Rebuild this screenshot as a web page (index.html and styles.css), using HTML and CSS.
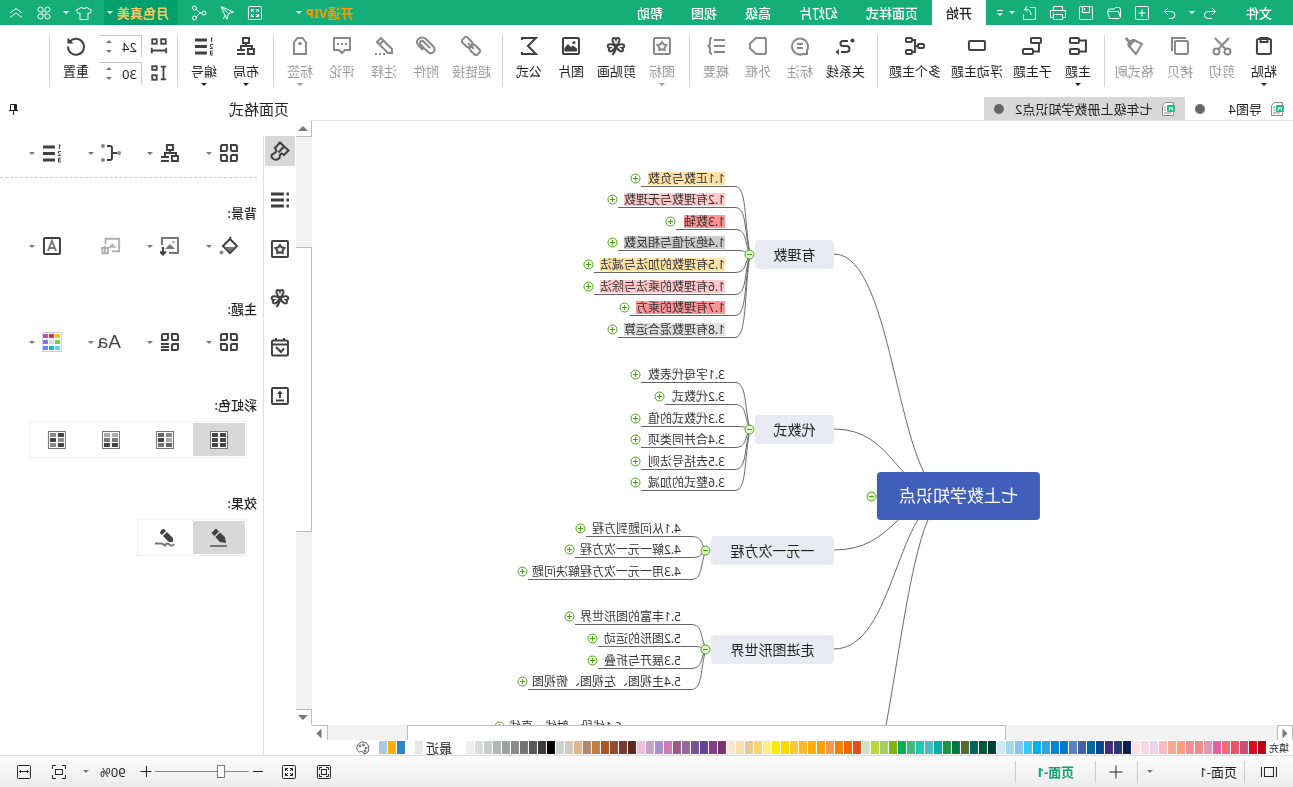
FILE: index.html
```html
<!DOCTYPE html>
<html lang="zh-CN">
<head>
<meta charset="utf-8">
<title>七年级上册数学知识点2</title>
<link rel="stylesheet" href="styles.css">
</head>
<body>
<svg class="sprite" aria-hidden="true">
  <symbol id="undo" viewBox="0 0 16 16"><path d="M3 6.5h7a3.5 3.5 0 0 1 0 7H6M6 3L2.500 6.500L6 10"/></symbol>
  <symbol id="redo" viewBox="0 0 16 16"><path d="M13 6.500H6.500a3.500 3.500 0 0 0 0 7H9M10 3l3.500 3.500L10 10"/></symbol>
  <symbol id="new" viewBox="0 0 16 16"><rect x="1.500" y="1.500" width="13" height="13" rx="1"/><path d="M8 4.500v7M4.500 8h7"/></symbol>
  <symbol id="open" viewBox="0 0 16 16"><path d="M2.500 13.500h10l2-7h-11l-2 6V4.500q0-2 2-2h3l1.500 1.500h4.500q1.500 0 1.500 2.500"/></symbol>
  <symbol id="save" viewBox="0 0 16 16"><rect x="1.500" y="1.500" width="13" height="13" rx="1"/><path d="M4.500 1.500v6h7v-6M9.500 3v2.500"/></symbol>
  <symbol id="print" viewBox="0 0 16 16"><path d="M3.500 5V1.500h9V5M3 12.500H.500V5.500h15v7H13M3.500 9.500h9v5h-9zM12 7.500h1"/></symbol>
  <symbol id="export" viewBox="0 0 16 16"><path d="M8 2.500H2.500v12h12V9M7 10q0-6 6-6M10.500 1.500L13.500 4l-2.500 3"/></symbol>
  <symbol id="expand" viewBox="0 0 16 16"><rect x="1.500" y="1.500" width="13" height="13" rx="1"/><path d="M4.500 7V4.500H7M9 4.500h2.500V7M11.500 9v2.500H9M7 11.500H4.500V9M4.500 4.500L7 7M11.500 4.500L9 7M4.500 11.500L7 9M11.500 11.500L9 9"/></symbol>
  <symbol id="send" viewBox="0 0 16 16"><path d="M14 1.500L1.500 7l5 1.500L8 14.500zM14 1.500L6.500 8.500M9 10l3 4"/></symbol>
  <symbol id="share" viewBox="0 0 16 16"><circle cx="3" cy="8" r="2"/><circle cx="12.500" cy="3" r="2"/><circle cx="12.500" cy="13" r="2"/><path d="M5 8h2l4-4M7 8l4 4"/></symbol>
  <symbol id="shirt" viewBox="0 0 16 16"><path d="M5 2.500q3 2 6 0l4.500 2.500-1.500 3.500-2-.5v6.500H4V8l-2 .5L.500 5z"/></symbol>
  <symbol id="petals" viewBox="0 0 16 16"><path d="M7 7H4.500a2.500 2.500 0 1 1 2.500-2.500zM9 7h2.500a2.500 2.500 0 1 0-2.500-2.500zM7 9H4.500a2.500 2.500 0 1 0 2.500 2.500zM9 9h2.500a2.500 2.500 0 1 1-2.500 2.500z"/></symbol>
  <symbol id="chevrons" viewBox="0 0 16 16"><path d="M2 8l6-4.500L14 8M2 12.500L8 8l6 4.500"/></symbol>

  <symbol id="paste" viewBox="0 0 20 20"><rect x="3" y="3" width="14" height="15" rx="1.500"/><rect x="6.500" y="2" width="7" height="4"/></symbol>
  <symbol id="cut" viewBox="0 0 20 20"><circle cx="4.500" cy="15.500" r="3"/><circle cx="15.500" cy="15.500" r="3"/><path d="M6.500 13L17 2M13.500 13L3 2"/></symbol>
  <symbol id="copy" viewBox="0 0 20 20"><rect x="2" y="5" width="13" height="13" rx="1"/><path d="M4 2h14v13"/></symbol>
  <symbol id="painter" viewBox="0 0 20 20"><path d="M2 8l8-4 5 6-7 8z"/><path class="solid" d="M8 4l4-1 2 1.500L17 1l2 2-3 3.500 1 2-2 3.500z"/></symbol>
  <symbol id="topic" viewBox="0 0 20 20"><rect x="9" y="2" width="9" height="5" rx="1"/><rect x="9" y="13" width="9" height="5" rx="1"/><path d="M8 4.500H2v11h6"/></symbol>
  <symbol id="subtopic" viewBox="0 0 20 20"><rect x="1" y="2" width="10" height="5" rx="1"/><rect x="9" y="13" width="10" height="5" rx="1"/><path d="M3 8v7.500h6"/></symbol>
  <symbol id="floating" viewBox="0 0 20 20"><rect x="2" y="5" width="16" height="9" rx="1"/></symbol>
  <symbol id="multi" viewBox="0 0 20 20"><rect x="1" y="8" width="6" height="4" rx="1"/><rect x="13" y="2" width="6" height="4" rx="1"/><rect x="13" y="14" width="6" height="4" rx="1"/><path d="M7 10h3M13 4h-3v12h3"/></symbol>
  <symbol id="relation" viewBox="0 0 20 20"><path d="M14 5H8.500a2.500 2.500 0 0 0 0 5" visibility="hidden"/><path d="M7 5h5a2.500 2.500 0 0 1 0 5H8.500a3 3 0 0 0 0 6H14"/><circle class="solid" cx="2.500" cy="4.500" r="2"/><path class="solid" d="M16 13l3.500 3-3.500 3z"/></symbol>
  <symbol id="callout" viewBox="0 0 20 20"><path d="M3 18v-3.500a8 8 0 1 1 4 3.500zM7 8h6M7 12h6"/></symbol>
  <symbol id="frame" viewBox="0 0 20 20"><path d="M3 2h9l6 5.500v5L12 18H3q-1 0-1-1V3q0-1 1-1z"/></symbol>
  <symbol id="summary" viewBox="0 0 20 20"><path d="M1 4h11M1 10h11M1 16h11M14 2q2 0 2 2v3.500q0 2.500 2.500 2.500Q16 10 16 12.500V16q0 2-2 2"/></symbol>
  <symbol id="mark" viewBox="0 0 20 20"><rect x="2" y="2" width="16" height="16" rx="1"/><path d="M10 6l1.600 2.300 2.900.8-1.800 2.200v2.700l-2.700-.8-2.700.8v-2.700L5.500 9.100l2.900-.8z"/></symbol>
  <symbol id="clover" viewBox="0 0 20 20"><path d="M10 9.500C6 7 5.500 2 8 2q1.500 0 2 1.500Q10.500 2 12 2c2.500 0 2 5-2 7.500"/><path d="M10 9.500C6 7 5.500 2 8 2q1.500 0 2 1.500Q10.500 2 12 2c2.500 0 2 5-2 7.500" transform="rotate(-108 10 10)"/><path d="M10 9.500C6 7 5.500 2 8 2q1.500 0 2 1.500Q10.500 2 12 2c2.500 0 2 5-2 7.500" transform="rotate(108 10 10)"/><path d="M10 10q0 5 3.500 9"/></symbol>
  <symbol id="image" viewBox="0 0 20 20"><rect x="2" y="2" width="16" height="16" rx="1"/><path class="solid" d="M4 15.500v-3l4 -3 2 1.500 3-3 3.500 4v3.500z"/><circle class="solid" cx="7" cy="6.500" r="1.500"/></symbol>
  <symbol id="sigma" viewBox="0 0 20 20"><path d="M17 4V2H3l8 8-8 8h14v-2"/></symbol>
  <symbol id="link" viewBox="0 0 20 20"><g transform="rotate(-45 10 10)"><rect x="-.5" y="6.500" width="10" height="7" rx="2"/><rect x="10.500" y="6.500" width="10" height="7" rx="2"/><path d="M6 10h8"/></g></symbol>
  <symbol id="clip" viewBox="0 0 20 20"><path d="M6 12l6-6q2-2 3.500-.5T15 9l-7 7q-3 2.500-5.500 0T3 10l7-7q4-3 7.500 0T17 10l-4 4"/></symbol>
  <symbol id="annotate" viewBox="0 0 20 20"><path d="M2 17v-4L13 2l4 4L6 17zM10.500 4.500l4 4"/><path d="M9 18h2M13 18h2M17 18h2"/></symbol>
  <symbol id="comment" viewBox="0 0 20 20"><path d="M2 2h16v12h-5l-3 3-3-3H2z"/><path d="M5 8h2M9 8h2M13 8h2"/></symbol>
  <symbol id="tag" viewBox="0 0 20 20"><path d="M4 18V6.500L7.500 2h5L16 6.500V18z"/><circle class="solid" cx="10" cy="7.500" r="1.800"/></symbol>
  <symbol id="layout" viewBox="0 0 20 20"><rect x="7" y="2" width="6" height="5"/><path d="M10 7v3M4 13v-3h11v3"/><rect x="2" y="13" width="6" height="5"/><path d="M11 14h8M11 18h8"/></symbol>
  <symbol id="number" viewBox="0 0 20 20"><path class="thick" d="M7 4h12M7 10.500h12M7 17h12"/><path class="fine" d="M1.500 2.500l1-1V6M1 8.500h2.500v2L1.500 12v.5H4M1 15h2.500v4H1M1 17h2.500"/></symbol>
  <symbol id="hgap" viewBox="0 0 20 20"><rect x="2.500" y="2.500" width="5" height="5"/><rect x="12.500" y="2.500" width="5" height="5"/><path d="M2 12v6M18 12v6M2 15h16"/></symbol>
  <symbol id="vgap" viewBox="0 0 20 20"><rect x="12.500" y="2.500" width="5" height="4"/><rect x="12.500" y="12.500" width="5" height="5"/><path d="M2 3h6M2 17h6M5 3v14"/></symbol>
  <symbol id="reset" viewBox="0 0 20 20"><path d="M16 5.500A8 8 0 1 0 18 10.500"/><path class="solid" d="M18.500 1.500v6h-6z"/></symbol>
  <symbol id="doc" viewBox="0 0 14 14"><path class="paper" d="M2.500 3V.500h8l3 3v10h-11v-3M10 5h2M10 8h2M5 11h7"/><rect class="badge" x="1" y="3" width="8" height="7" rx="1"/><path class="letter" d="M3.500 8.500V5l1.500 2 1.500-2v3.500"/></symbol>
  <symbol id="pin" viewBox="0 0 12 12"><path d="M2.500 7.500V1.500h6v6M1 7.500h9M5.500 8v4"/><path class="solid" d="M3 2h2v5H3z"/></symbol>

  <symbol id="grid" viewBox="0 0 20 20"><path d="M2 3.500Q2 2 3.500 2H8v4.500Q8 8 6.500 8H2zM12 2h4.500Q18 2 18 3.500V8h-4.500Q12 8 12 6.500zM2 12h4.500Q8 12 8 13.500V18H3.500Q2 18 2 16.500zM13.500 12H18v4.500q0 1.500-1.500 1.500H12v-4.500q0-1.500 1.500-1.500z"/></symbol>
  <symbol id="gridlist" viewBox="0 0 20 20"><path d="M2 3.500Q2 2 3.500 2H8v4.500Q8 8 6.500 8H2zM12 2h4.500Q18 2 18 3.500V8h-4.500Q12 8 12 6.500zM2 12h4.500Q8 12 8 13.500V18H3.500Q2 18 2 16.500zM11 12h8M11 15h8M11 18h8"/></symbol>
  <symbol id="branch" viewBox="0 0 20 20"><path d="M4 10h5M14 3h-3q-2 0-2 2v10q0 2 2 2h3"/><g class="pale"><circle cx="2" cy="10" r="2"/><circle cx="18" cy="3" r="2"/><circle cx="18" cy="17" r="2"/></g></symbol>
  <symbol id="bucket" viewBox="0 0 20 20"><path d="M9 3l-7 7 7 7 7-7zM10 4L8 1"/><path d="M4 11h10l-5 5z" fill="#777" stroke="none"/><circle class="pale" cx="17.500" cy="16.500" r="2"/></symbol>
  <symbol id="imgdown" viewBox="0 0 20 20"><path class="gray" d="M18 9V2H2v15h9"/><path class="graysolid" d="M5 13l5-5 5 5z"/><circle class="graysolid" cx="6.500" cy="6" r="1"/><path d="M17 11v7M14 15.500l3 3 3-3"/></symbol>
  <symbol id="imgtrash" viewBox="0 0 22 20"><path class="gray" d="M17 8V2H2v14h8"/><path class="graysolid" d="M5 12l4.500-5 4.500 5z"/><path class="gray" d="M13 12h9M14.500 13v5h6v-5M17.500 10v8"/></symbol>
  <symbol id="textbox" viewBox="0 0 20 20"><rect x="2" y="2" width="16" height="16" rx="1"/><path class="gray" d="M6 15l4-10 4 10M7 12h6"/></symbol>
  <symbol id="palettegrid" viewBox="0 0 20 20"><rect x=".5" y=".5" width="19" height="19" fill="#fff" stroke="#c9d0dd" stroke-width="1"/><g stroke="none"><path fill="#f3c400" d="M2 2h5v4H2z"/><path fill="#e02e4c" d="M8 2h5v4H8z"/><path fill="#bd4fc8" d="M14 2h5v4h-5z"/><path fill="#76cf42" d="M2 8h5v4H2z"/><path fill="#dcdcdc" d="M8 8h5v4H8z"/><path fill="#8c71ea" d="M14 8h5v4h-5z"/><path fill="#6bcada" d="M2 14h5v4H2z"/><path fill="#00baf2" d="M8 14h5v4H8z"/><path fill="#6b83ff" d="M14 14h5v4h-5z"/></g></symbol>
  <symbol id="brush" viewBox="0 0 20 20"><path d="M10 1.500L1.500 9.500 6 14l2.500-1.500 1.500 1.500.5 3q3 3 6 1t1.500-4.500L15 12l-1.500-2 1.500-3zM6 5.500l5.500 6"/></symbol>
  <symbol id="outline" viewBox="0 0 20 20"><path class="thick" d="M6 4h13M6 10h13M6 16h13"/><path class="thick" d="M1 4h2.500M1 10h2.500M1 16h2.500"/></symbol>
  <symbol id="task" viewBox="0 0 20 20"><rect x="2" y="3.500" width="16" height="15" rx="1.500"/><path d="M2 7.500h16M6 1v3M14 1v3M6 11.500l3 3.500 5-5"/></symbol>
  <symbol id="upload" viewBox="0 0 20 20"><rect x="2" y="2" width="16" height="16" rx="1"/><path d="M6 14.500h8M10 12V7"/><path class="solid" d="M7 8l3-3.500L13 8z"/></symbol>
  <symbol id="pen" viewBox="0 0 20 20"><path class="solid" d="M3 15l1-6 5-4.500L13.500 9 9 14zM10 3.500l3-3 4.500 4.500-3 3z"/><path class="gray" d="M2 18h17"/></symbol>
  <symbol id="sketch" viewBox="0 0 20 20"><path class="solid" d="M2 14v-4l6-6 4 4-6 6zM9 3l2-2q3 0 4 4l-2 2z"/><path class="gray" d="M1 16q2 3 4.500 .5t4.500 1q2-2 4-2h6"/></symbol>

  <symbol id="panels" viewBox="0 0 16 16"><rect x="3.500" y="3.500" width="9" height="9"/><path d="M.5 3v10M15.500 3v10"/></symbol>
  <symbol id="fitpage" viewBox="0 0 16 16"><rect x="1.500" y="1.500" width="13" height="13" rx="1"/><rect x="5.500" y="5.500" width="5" height="5"/><path d="M3.500 6V3.500H6M10 3.500h2.500V6M12.500 10v2.500H10M6 12.500H3.500V10"/></symbol>
  <symbol id="focus" viewBox="0 0 16 16"><path d="M1.500 5V1.500H5M11 1.500h3.500V5M14.500 11v3.500H11M5 14.500H1.500V11"/><rect x="4.500" y="5.500" width="7" height="5"/></symbol>
  <symbol id="fitwidth" viewBox="0 0 16 16"><rect x="1.500" y="1.500" width="13" height="13" rx="1"/><path d="M3.500 7.500h9M5 6L3.500 7.500 5 9M11 6l1.500 1.500L11 9"/></symbol>
  <symbol id="plus" viewBox="0 0 16 16"><path d="M8 1.500v13M1.500 8h13"/></symbol>
  <symbol id="palette" viewBox="0 0 14 14"><path d="M2 11Q-.5 5 4 2t8 1.500q3 5-1.500 7.500-2-1-3.500 0t-1 2-4-2z"/><circle cx="4" cy="7" r="1"/><circle cx="6.500" cy="4" r="1"/><circle cx="10" cy="5" r="1"/><circle cx="5" cy="10" r="1"/></symbol>
</svg>

<div class="app">
  <header class="titlebar">
    <button class="file">文件</button>
    <button class="tool" aria-label="撤销"><svg><use href="#undo"/></svg></button>
    <button class="drop" aria-label="撤销列表"><i class="caret"></i></button>
    <button class="tool" aria-label="重做"><svg><use href="#redo"/></svg></button>
    <button class="tool" aria-label="新建"><svg><use href="#new"/></svg></button>
    <button class="tool" aria-label="打开"><svg><use href="#open"/></svg></button>
    <button class="tool" aria-label="保存"><svg><use href="#save"/></svg></button>
    <button class="tool" aria-label="打印"><svg><use href="#print"/></svg></button>
    <button class="tool" aria-label="导出"><svg><use href="#export"/></svg></button>
    <button class="drop" aria-label="导出列表"><i class="caret"></i></button>
    <button class="drop more" aria-label="自定义"><i class="dash"></i><i class="caret"></i></button>
    <nav class="menu">
      <button class="current">开始</button><button>页面样式</button><button>幻灯片</button><button>高级</button><button>视图</button><button>帮助</button>
    </nav>
    <button class="vip">开通VIP <i class="caret"></i></button>
    <button class="tool" aria-label="全屏"><svg><use href="#expand"/></svg></button>
    <button class="tool" aria-label="发送"><svg><use href="#send"/></svg></button>
    <button class="tool" aria-label="分享"><svg><use href="#share"/></svg></button>
    <button class="user">月色真美 <i class="caret"></i></button>
    <button class="tool" aria-label="皮肤"><svg><use href="#shirt"/></svg></button>
    <button class="drop" aria-label="皮肤列表"><i class="caret"></i></button>
    <button class="tool" aria-label="应用"><svg><use href="#petals"/></svg></button>
    <button class="tool" aria-label="收起"><svg><use href="#chevrons"/></svg></button>
  </header>

  <section class="ribbon">
    <div class="group first">
      <button class="cmd"><svg><use href="#paste"/></svg>粘贴<i class="caret"></i></button>
      <button class="cmd off"><svg><use href="#cut"/></svg>剪切</button>
      <button class="cmd off"><svg><use href="#copy"/></svg>拷贝</button>
      <button class="cmd off"><svg><use href="#painter"/></svg>格式刷</button>
    </div>
    <div class="group">
      <button class="cmd"><svg><use href="#topic"/></svg>主题<i class="caret"></i></button>
      <button class="cmd"><svg><use href="#subtopic"/></svg>子主题</button>
      <button class="cmd"><svg><use href="#floating"/></svg>浮动主题</button>
      <button class="cmd"><svg><use href="#multi"/></svg>多个主题</button>
    </div>
    <div class="group">
      <button class="cmd"><svg><use href="#relation"/></svg>关系线</button>
      <button class="cmd off"><svg><use href="#callout"/></svg>标注</button>
      <button class="cmd off"><svg><use href="#frame"/></svg>外框</button>
      <button class="cmd off"><svg><use href="#summary"/></svg>概要</button>
    </div>
    <div class="group">
      <button class="cmd off"><svg><use href="#mark"/></svg>图标<i class="caret"></i></button>
      <button class="cmd"><svg><use href="#clover"/></svg>剪贴画</button>
      <button class="cmd"><svg><use href="#image"/></svg>图片</button>
      <button class="cmd"><svg><use href="#sigma"/></svg>公式</button>
    </div>
    <div class="group">
      <button class="cmd off"><svg><use href="#link"/></svg>超链接</button>
      <button class="cmd off"><svg><use href="#clip"/></svg>附件</button>
      <button class="cmd off"><svg><use href="#annotate"/></svg>注释</button>
      <button class="cmd off"><svg><use href="#comment"/></svg>评论</button>
      <button class="cmd off"><svg><use href="#tag"/></svg>标签<i class="caret"></i></button>
    </div>
    <div class="group">
      <button class="cmd"><svg><use href="#layout"/></svg>布局<i class="caret"></i></button>
      <button class="cmd"><svg><use href="#number"/></svg>编号<i class="caret"></i></button>
    </div>
    <div class="group">
      <div class="spacing">
        <label class="spin"><svg><use href="#hgap"/></svg><input type="text" value="24" aria-label="水平间距"><span class="steps"><i class="caret up"></i><i class="caret"></i></span></label>
        <label class="spin"><svg><use href="#vgap"/></svg><input type="text" value="30" aria-label="垂直间距"><span class="steps"><i class="caret up"></i><i class="caret"></i></span></label>
      </div>
      <button class="cmd"><svg><use href="#reset"/></svg>重置</button>
    </div>
  </section>

  <main class="work">
    <div class="editor">
      <div class="doctabs">
        <button class="doctab"><svg><use href="#doc"/></svg><span>导图4</span><i class="dot"></i></button>
        <button class="doctab active"><svg><use href="#doc"/></svg><span>七年级上册数学知识点2</span><i class="dot"></i></button>
      </div>
      <div class="stage">
        <div class="canvas" id="canvas"></div>
        <div class="vscroll">
          <button class="arrow" aria-label="向上"><i class="tri up"></i></button>
          <div class="track"><div class="thumb"></div></div>
          <button class="arrow" aria-label="向下"><i class="tri"></i></button>
        </div>
      </div>
      <div class="hscroll">
        <button class="arrow" aria-label="向左"><i class="tri left"></i></button>
        <div class="track"><div class="thumb"></div></div>
        <button class="arrow" aria-label="向右"><i class="tri right"></i></button>
      </div>
      <div class="colors">
        <span class="fill">填充</span>
        <div class="swatches" id="swatches"></div>
        <span class="recent">最近</span>
        <div class="swatches" id="recent"></div>
        <button class="pick" aria-label="更多颜色"><svg><use href="#palette"/></svg></button>
      </div>
    </div>

    <aside class="dock">
      <div class="docktitle"><h2>页面格式</h2><button class="pin" aria-label="固定"><svg><use href="#pin"/></svg></button></div>
      <div class="dockbody">
        <nav class="strip">
          <button class="on" aria-label="格式"><svg><use href="#brush"/></svg></button>
          <button aria-label="大纲"><svg><use href="#outline"/></svg></button>
          <button aria-label="图标"><svg><use href="#mark"/></svg></button>
          <button aria-label="剪贴画"><svg><use href="#clover"/></svg></button>
          <button aria-label="任务"><svg><use href="#task"/></svg></button>
          <button aria-label="附件"><svg><use href="#upload"/></svg></button>
        </nav>
        <div class="panel">
          <div class="row top">
            <button aria-label="样式"><svg><use href="#grid"/></svg><i class="caret"></i></button>
            <button aria-label="布局"><svg><use href="#layout"/></svg><i class="caret"></i></button>
            <button aria-label="分支"><svg><use href="#branch"/></svg><i class="caret"></i></button>
            <button aria-label="编号"><svg><use href="#number"/></svg><i class="caret"></i></button>
          </div>
          <section class="sec">
            <h3>背景:</h3>
            <div class="row">
              <button aria-label="填充"><svg><use href="#bucket"/></svg><i class="caret"></i></button>
              <button aria-label="插入图片"><svg><use href="#imgdown"/></svg><i class="caret"></i></button>
              <button class="dim" aria-label="移除图片"><svg><use href="#imgtrash"/></svg></button>
              <button aria-label="水印"><svg><use href="#textbox"/></svg><i class="caret"></i></button>
            </div>
          </section>
          <section class="sec">
            <h3>主题:</h3>
            <div class="row">
              <button aria-label="主题"><svg><use href="#grid"/></svg><i class="caret"></i></button>
              <button aria-label="主题列表"><svg><use href="#gridlist"/></svg><i class="caret"></i></button>
              <button><span class="aa">Aa</span><i class="caret"></i></button>
              <button aria-label="主题颜色"><svg><use href="#palettegrid"/></svg><i class="caret"></i></button>
            </div>
          </section>
          <section class="sec">
            <h3>彩虹色:</h3>
            <div class="seg" id="rainbow"></div>
          </section>
          <section class="sec">
            <h3>效果:</h3>
            <div class="seg">
              <button class="on" aria-label="标准"><svg><use href="#pen"/></svg></button>
              <button aria-label="手绘"><svg><use href="#sketch"/></svg></button>
            </div>
          </section>
        </div>
      </div>
    </aside>
  </main>

  <footer class="status">
    <button class="view" aria-label="页面列表"><svg><use href="#panels"/></svg></button>
    <button class="pagelist">页面-1<i class="caret"></i></button>
    <button class="add" aria-label="新建页面"><svg><use href="#plus"/></svg></button>
    <button class="page">页面-1</button>
    <div class="zoombar">
      <button class="sq" aria-label="适合页面"><svg><use href="#fitpage"/></svg></button>
      <button class="sq" aria-label="全屏"><svg><use href="#expand"/></svg></button>
      <button class="step" aria-label="缩小"><svg><path d="M1 5.500h10"/></svg></button>
      <input type="range" min="0" max="100" value="27" aria-label="缩放">
      <button class="step" aria-label="放大"><svg><path d="M.5 5.500h11M5.500 0v11"/></svg></button>
      <button class="percent">90%<i class="caret"></i></button>
      <button class="sq" aria-label="聚焦"><svg><use href="#focus"/></svg></button>
      <button class="sq" aria-label="适合宽度"><svg><use href="#fitwidth"/></svg></button>
    </div>
  </footer>
</div>
<script src="app.js"></script>
</body>
</html>
```

FILE: styles.css
```css
* { box-sizing: border-box; }

body {
  margin: 0;
  font: 13px/18px "Noto Sans", "Noto Sans CJK SC", sans-serif;
  color: #222;
  background: #fff;
}

button {
  border: 0;
  padding: 0;
  margin: 0;
  background: none;
  font: inherit;
  color: inherit;
  white-space: nowrap;
}

svg {
  fill: none;
  stroke: currentColor;
  stroke-width: 2;
  flex: none;
}

.sprite { position: absolute; width: 0; height: 0; }
.solid { fill: currentColor; stroke: none; }
.pale { fill: #888; stroke: none; }
.gray { stroke: #777; }
.graysolid { fill: #777; stroke: none; }
.thick { stroke-width: 3; }
.fine { stroke-width: 1; }

.caret {
  display: inline-block;
  flex: none;
  border: 3px solid transparent;
  border-top-color: currentColor;
  border-bottom: 0;
}
.caret.up { transform: rotate(180deg); }

.app {
  display: flex;
  flex-direction: column;
  height: 100vh;
  overflow: hidden;
  transform: scaleX(-1);
}

/* title bar */
.titlebar {
  display: flex;
  align-items: stretch;
  flex: none;
  height: 25px;
  padding: 0 2px 0 21px;
  background: #15ae78;
  color: #fff;
  font-weight: 500;
}
.titlebar button { display: flex; align-items: center; }
.titlebar svg { width: 16px; height: 16px; stroke-width: 1; }
.titlebar .file { margin-right: 20px; width: 28px; }
.titlebar .tool { width: 28px; justify-content: center; }
.titlebar .drop { width: 12px; padding-left: 1px; }
.titlebar .more { flex-direction: column; align-items: flex-start; justify-content: center; gap: 2px; }
.dash { width: 6px; height: 1px; background: #fff; }
.menu { display: flex; margin-left: 6px; }
.menu button { padding: 0 14px; }
.menu .current { background: #fff; color: #222; }
.titlebar .vip { gap: 4px; margin: 0 27px 0 auto; color: #ff9a00; font-weight: 700; }
.titlebar .vip .caret, .titlebar .user .caret { color: #fff; }
.titlebar .user { gap: 4px; padding: 0 3px 0 9px; margin: 0 6px 0 7px; background: #009f6b; color: #ffc45c; font-weight: 700; }

/* ribbon */
.ribbon { display: flex; flex: none; height: 72px; padding-top: 10px; }
.group {
  display: flex;
  align-items: flex-start;
  height: 52px;
  padding: 0 6px 0 5px;
  border-right: 1px solid #d0d0d0;
}
.group.first { padding: 0 5px 0 8px; }
.cmd {
  display: flex;
  flex-direction: column;
  align-items: center;
  min-width: 42px;
  padding: 1px 5px 0;
}
.cmd svg { width: 20px; height: 20px; margin-bottom: 6px; color: #404040; }
.cmd .caret { margin-top: 3px; }
.cmd.off { color: #999; }
.cmd.off svg { color: #888; }
.group:nth-child(n+3) { padding: 0 5px 0 7px; }
.group:nth-child(n+4) { padding: 0 5px 0 6px; }
.spacing { display: grid; gap: 5px; padding: 0 2px 0 3px; }
.spin { display: flex; align-items: center; height: 22px; }
.spin svg { width: 18px; height: 18px; margin-right: 8px; color: #404040; }
.spin input {
  width: 28px;
  height: 22px;
  padding: 0 0 0 4px;
  border: 1px solid #c4c4c4;
  border-width: 1px 0 0 1px;
  outline: 0;
  font: inherit;
  color: #222;
}
.steps { display: grid; align-content: center; justify-items: start; gap: 7px; width: 15px; height: 22px; padding-left: 2px; border-top: 1px solid #c4c4c4; color: #777; }

/* work area */
.work { display: flex; flex: 1; min-height: 0; }
.editor { display: flex; flex-direction: column; flex: 1; min-width: 0; }
.doctabs { display: flex; flex: none; height: 24px; margin-right: 14px; border-bottom: 1px solid #e4e4e4; }
.doctab { display: flex; align-items: center; padding: 0 10px 0 8px; }
.doctab svg { width: 14px; height: 14px; margin-right: 9px; stroke-width: 1; }
.doctab .dot { width: 10px; height: 10px; margin-left: 11px; border-radius: 50%; background: #666; }
.doctab:first-child .dot { margin-left: 24px; }
.doctab.active { padding-left: 9px; background: #d8d8d8; }
.paper { stroke: #888; fill: #fff; }
.badge { fill: #16c183; stroke: none; }
.letter { stroke: #fff; }

.stage { display: flex; flex: 1; min-height: 0; }
.canvas { position: relative; flex: 1; min-width: 0; overflow: hidden; }
.canvas svg { position: absolute; left: 0; top: 0; width: 100%; height: 100%; stroke: #666; stroke-width: 1; }
.canvas .toggle { stroke: #43a30b; fill: #fff; }
.canvas .open { fill: #dff5cf; }
.node { position: absolute; white-space: nowrap; }
.root { padding: 12px 22px; border-radius: 4px; background: #405eba; color: #fff; font-size: 17px; line-height: 24px; }
.main { display: grid; place-items: center; border-radius: 4px; background: #eaeaf3; font-size: 14px; line-height: 29px; }
.leaf { font-size: 12px; line-height: 13px; color: #333; }

.vscroll { display: flex; flex-direction: column; flex: none; width: 16px; }
.arrow { display: grid; place-items: center; flex: none; width: 16px; height: 16px; border: 1px solid #bbb; border-width: 0 0 1px 1px; }
.vscroll .arrow:last-child { border-width: 1px 0 0 1px; }
.track { flex: 1; background: #f2f2f2; }
.vscroll .track { display: grid; grid-template-rows: 110fr 285fr 177fr; }
.vscroll .thumb { grid-row: 2; border: 1px solid #bbb; border-right: 0; background: #fff; }
.tri { border: 5px solid transparent; border-top-color: #777; border-bottom: 0; }
.tri.up { transform: rotate(180deg); }
.tri.left { transform: rotate(90deg); }
.tri.right { transform: rotate(-90deg); }
.hscroll { display: flex; flex: none; height: 15px; margin-right: 16px; }
.hscroll .arrow { height: 15px; border-width: 1px 1px 0; }
.hscroll .arrow:last-child { border-left: 1px solid #bbb; border-right: 0; }
.hscroll .track { display: grid; grid-template-columns: 271fr 599fr 79fr; }
.hscroll .thumb { grid-column: 2; border: 1px solid #bbb; border-bottom: 0; background: #fff; }

.colors { display: flex; align-items: center; flex: none; height: 15px; padding-left: 4px; }
.colors .fill { width: 23px; font-size: 10px; }
.swatches { display: flex; gap: 1px; }
.swatches button { width: 8px; height: 13px; }
.recent { margin: 0 3px 0 14px; }
#recent button:first-child { margin-right: 9px; }
.pick { display: flex; margin-left: 9px; color: #555; }
.pick svg { width: 14px; height: 14px; stroke-width: 1; }

/* dock */
.dock { display: flex; flex-direction: column; flex: none; width: 296px; }
.docktitle { display: flex; justify-content: space-between; align-items: center; height: 24px; padding: 0 7px; }
.docktitle h2 { margin: 0; font-size: 15px; font-weight: 400; }
.pin { display: flex; }
.pin svg { width: 12px; height: 12px; stroke-width: 1; }
.dockbody { display: flex; flex: 1; padding-top: 15px; }
.strip { display: flex; flex-direction: column; gap: 19px; width: 33px; padding-left: 1px; border-right: 1px solid #dcdcdc; }
.strip button { display: grid; place-items: center; width: 30px; height: 30px; color: #404040; }
.strip svg { width: 20px; height: 20px; }
.strip .on { background: #d8d8d8; }
.panel { flex: 1; padding-left: 6px; }
.row { display: flex; padding-left: 18px; color: #404040; }
.row button { display: flex; align-items: center; gap: 7px; width: 59px; height: 22px; }
.row svg { width: 20px; height: 20px; }
.row .caret { color: #777; }
.row .dim { opacity: .6; }
.aa { width: 22px; margin-right: -2px; font: 500 19px/22px "Liberation Sans", sans-serif; color: #444; }
.row.top { height: 42px; padding-top: 6px; margin-bottom: 26px; border-bottom: 1px dashed #ccc; }
.sec { height: 96px; }
.sec h3 { margin: 0 0 13px; font-size: 13px; line-height: 18px; font-weight: 500; }
.sec:nth-of-type(3) { height: 98px; }
.seg { display: inline-flex; gap: 2px; height: 37px; margin: -6px 0 0 10px; padding: 1px; border: 1px solid #f0f0f0; vertical-align: top; color: #404040; }
.seg button { display: grid; place-items: center; width: 52px; height: 33px; }
.seg .on { background: #d8d8d8; }
.seg svg { width: 20px; height: 20px; }

/* status bar */
.status { display: flex; align-items: center; flex: none; height: 32px; border-top: 1px solid #dcdcdc; background: linear-gradient(#fdfdfd, #ececec); }
.status button { display: flex; align-items: center; justify-content: center; height: 22px; }
.status svg { width: 16px; height: 16px; stroke-width: 1; }
.status .view, .status .pagelist, .status .add, .status .page { border-right: 1px solid #ccc; }
.status .view { width: 49px; }
.status .pagelist { width: 107px; padding: 0 9px 0 7px; justify-content: space-between; }
.status .pagelist .caret { color: #777; }
.status .add { width: 42px; }
.status .page { width: 80px; color: #16a074; font-weight: 700; }
.zoombar { display: flex; align-items: center; margin-left: auto; padding-right: 16px; }
.zoombar .sq { width: 16px; margin-right: 19px; }
.zoombar .sq:last-child { margin-right: 0; }
.zoombar .sq:nth-child(2) { margin-right: 17px; }
.zoombar .step svg { width: 12px; height: 12px; }
.zoombar input { appearance: none; width: 94px; height: 14px; margin: 0 3px; background: linear-gradient(#888, #888) center / 100% 1px no-repeat; }
.zoombar input::-webkit-slider-thumb { appearance: none; width: 8px; height: 13px; border: 1px solid #777; background: #fff; }
.percent { margin: 0 16px 0 14px; gap: 11px; }
.percent .caret { color: #777; }
```

FILE: app.js
```js
const SVG = "http://www.w3.org/2000/svg";
const make = (name, attrs, parent) => {
  const el = document.createElementNS(SVG, name);
  for (const key in attrs) el.setAttribute(key, attrs[key]);
  parent.append(el);
  return el;
};

// Fill colours
const fillColors = (
  "b50717 d90b1f cb4f78 e95464 ed6d75 e85f9f e198b4 ec8f85 f19097 ff9e78 f0aa96 f8bcbc e9d5e7 fcd5e4 fbe0e5 " +
  "0c2051 243a73 432a7c 084a8e 0068a3 3f61b0 5583c3 007acf 0088ce 2ca6e0 00b1f0 36c8ff 8ac2eb a2d9ee ceeaf4 " +
  "004036 005731 00645f 556b2f 007944 1e963d 00af9f 4cbcc0 1acbb0 48b97c 00af53 7db70d a4cf60 bbd63d cde5ca " +
  "e35020 eb6a00 f08300 f19850 f2a200 ffae00 ffb834 faca32 ffd900 ffeb00 fcf186 fed374 eacb96 fddcad fce6d0 " +
  "7a3273 823f86 674193 76549a 976a9f 9d5b8b cc7db1 a891cf c7a5ca ebc1db " +
  "5b2a1b 763b30 954e2a aa5628 c27c41 b4866d deb786 d4cac5 cad4cb " +
  "000000 3f3938 5a5757 747474 898989 9fa0a0 b4b5b5 caccca dcdcdc efefef"
).split(" ");
const recentColors = ["e8e8e8", "2e83c2", "ffae00", "abc8e9"];
const addSwatches = (id, colors) => {
  for (const color of colors) {
    const b = document.createElement("button");
    b.style.background = "#" + color;
    b.setAttribute("aria-label", "#" + color);
    document.getElementById(id).append(b);
  }
};
addSwatches("swatches", fillColors);
addSwatches("recent", recentColors);

// Rainbow modes: three rows of two cells
const rainbowModes = [
  ["#444", "#444", "#444", "#444", "#444", "#444"],
  ["#888", "#666", "#aaa", "#444", "#666", "#777"],
  ["#aaa", "#aaa", "#777", "#777", "#444", "#444"],
  ["#444", "#888", "#888", "#444", "#444", "#888"]
];
rainbowModes.forEach((cells, i) => {
  const b = document.createElement("button");
  b.setAttribute("aria-label", "彩虹色 " + (i + 1));
  if (i === 0) b.className = "on";
  const icon = make("svg", { viewBox: "0 0 20 20" }, b);
  make("rect", { x: 1.5, y: 1.5, width: 17, height: 17, fill: "#fff", stroke: "#777", "stroke-width": 1 }, icon);
  cells.forEach((fill, n) => make("rect", {
    x: n % 2 ? 11 : 3, y: 3 + 5 * Math.floor(n / 2), width: 6, height: 4, fill, stroke: "none"
  }, icon));
  document.getElementById("rainbow").append(b);
});

// Mind map, in canvas coordinates
const canvas = document.getElementById("canvas");
const lines = make("svg", {}, canvas);
const addNode = (cls, text, left, y, width) => {
  const d = document.createElement("div");
  d.className = "node " + cls;
  d.textContent = text;
  d.style.left = left + "px";
  d.style.top = y + "px";
  if (width) d.style.width = width + "px";
  canvas.append(d);
  return d;
};
const toggles = [];

const branches = [
  { text: "有理数", y: 133, width: 79, leaves: [
    ["1.1正数与负数", 65, 652, "#ffe2a8"],
    ["1.2有理数与无理数", 86, 675, "#ffc9cc"],
    ["1.3数轴", 108, 617, "#ff9494"],
    ["1.4绝对值与相反数", 129, 675, "#cccccc"],
    ["1.5有理数的加法与减法", 151, 699, "#ffe2a8"],
    ["1.6有理数的乘法与除法", 173, 699, "#ffc9cc"],
    ["1.7有理数的乘方", 194, 663, "#ff9494"],
    ["1.8有理数混合运算", 216, 675, "#e0e0e0"]] },
  { text: "代数式", y: 308, width: 79, leaves: [
    ["3.1字母代表数", 261, 652],
    ["3.2代数式", 283, 628],
    ["3.3代数式的值", 305, 652],
    ["3.4合并同类项", 326, 652],
    ["3.5去括号法则", 348, 652],
    ["3.6整式的加减", 369, 652]] },
  { text: "一元一次方程", y: 429, width: 123, leaves: [
    ["4.1从问题到方程", 415, 707],
    ["4.2解一元一次方程", 436, 718],
    ["4.3用一元一次方程解决问题", 458, 765]] },
  { text: "走进图形世界", y: 528, width: 123, leaves: [
    ["5.1丰富的图形世界", 503, 718],
    ["5.2图形的运动", 525, 695],
    ["5.3展开与折叠", 547, 695],
    ["5.4主视图、左视图、俯视图", 568, 765]] },
  { text: "", y: 729, width: 182, leaves: [
    ["6.1线段、射线、直线", 613, 788]] }
];

for (const branch of branches) {
  const hub = 459 + branch.width + 5;
  make("path", { d: `M459 ${branch.y}C397 ${branch.y} 397 375 343 375` }, lines);
  if (branch.text) addNode("main", branch.text, 459, branch.y - 14, branch.width);
  for (const [text, y, end, color] of branch.leaves) {
    const line = y + 0.5;
    make("path", { d: `M${hub} ${branch.y}C${hub + 6} ${(branch.y + y) / 2} ${hub + 3} ${line} ${hub + 15} ${line}H${end}` }, lines);
    const leaf = addNode("leaf", text, hub + 25, y - 14);
    if (color) leaf.style.background = color;
    toggles.push([end + 5, y - 8, false]);
  }
  toggles.push([hub, branch.y, true]);
}
addNode("root", "七上数学知识点", 253, 351);
toggles.push([421, 375, true]);

const marks = make("svg", {}, canvas);
for (const [x, y, open] of toggles) {
  make("circle", { cx: x + 0.5, cy: y + 0.5, r: 4.5, class: open ? "toggle open" : "toggle" }, marks);
  make("path", { d: `M${x - 2} ${y + 0.5}h5` + (open ? "" : `M${x + 0.5} ${y - 2}v5`), class: "toggle" }, marks);
}
```
